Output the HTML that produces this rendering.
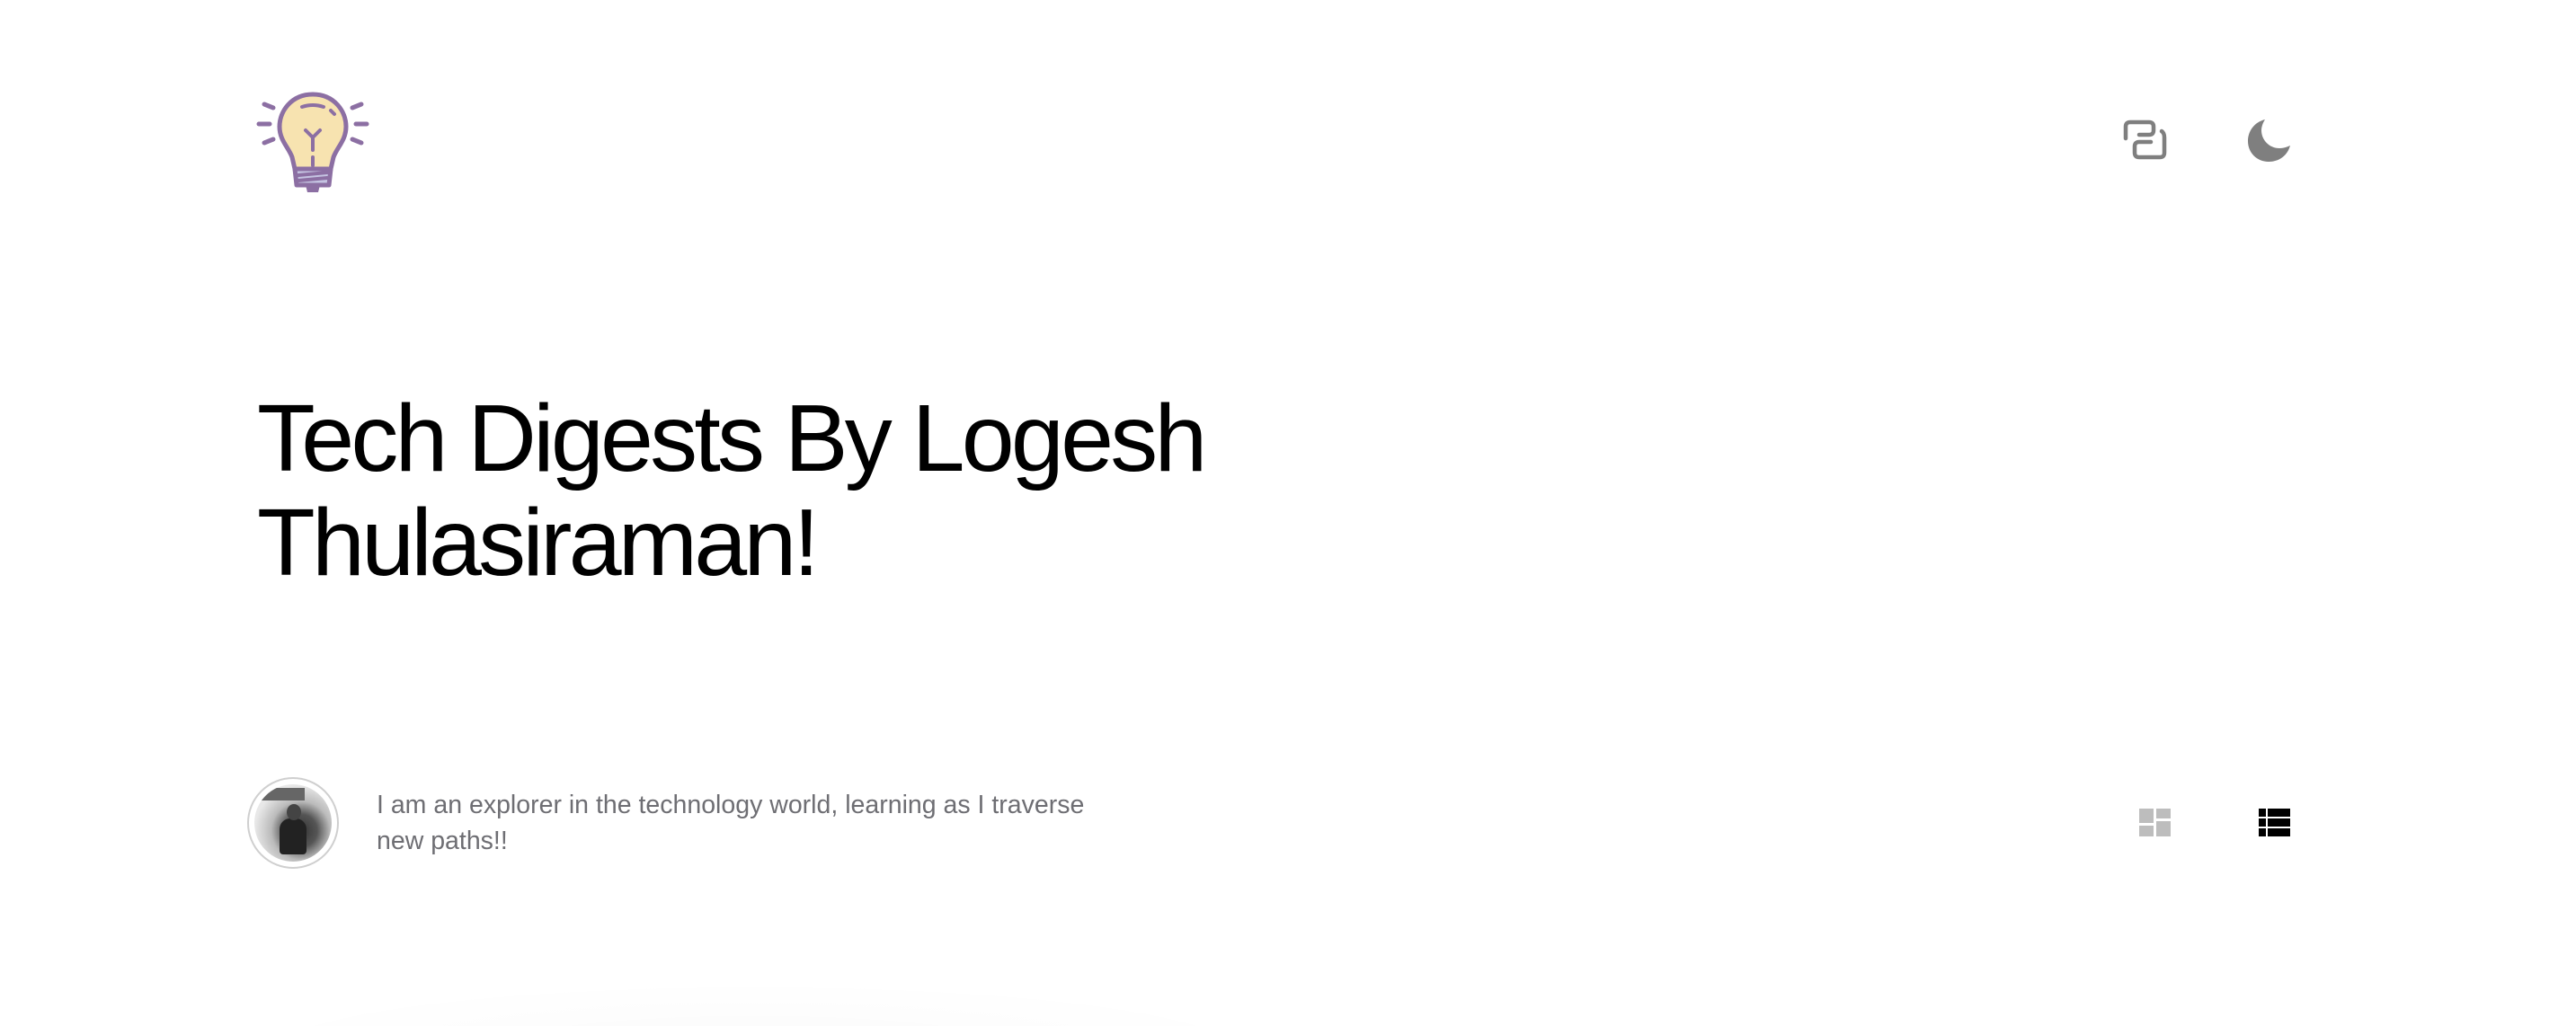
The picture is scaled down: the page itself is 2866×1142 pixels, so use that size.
<!DOCTYPE html>
<html><head><meta charset="utf-8"><style>
html,body{margin:0;padding:0;background:#fff;width:2866px;height:1142px;overflow:hidden;position:relative;font-family:"Liberation Sans",sans-serif}
.abs{position:absolute}
h1{position:absolute;left:286px;top:430px;margin:0;font-weight:400;font-size:106px;line-height:116px;letter-spacing:-3.8px;color:#000;width:1400px}
.bio{left:419px;top:876px;font-size:28.5px;line-height:40px;color:#6e6e73;width:1000px}
.shadow{left:240px;top:1090px;width:1200px;height:80px;background:radial-gradient(ellipse at 50% 100%,rgba(0,0,0,0.02),rgba(0,0,0,0) 70%)}
</style></head><body>
<svg class="abs" style="left:284px;top:98px" width="128" height="120" viewBox="0 0 128 120">
 <g stroke="#8c6fa3" stroke-width="5" stroke-linecap="round" fill="none">
  <line x1="4" y1="40" x2="16" y2="40"/><line x1="112" y1="40" x2="124" y2="40"/>
  <line x1="10" y1="18" x2="20" y2="22"/><line x1="118" y1="18" x2="108" y2="22"/>
  <line x1="10" y1="61" x2="20" y2="57"/><line x1="118" y1="61" x2="108" y2="57"/>
 </g>
 <path d="M64 7 C40 7 27 26 27 43 C27 58 37 66 41 77 L44 90 L84 90 L87 77 C91 66 101 58 101 43 C101 26 88 7 64 7Z" fill="#f7e3b0" stroke="#8c6fa3" stroke-width="5"/>
 <path d="M44 90 L84 90 L82 108 L46 108Z" fill="#c5c4e2" stroke="#8c6fa3" stroke-width="5" stroke-linejoin="round"/>
 <g stroke="#8c6fa3" stroke-width="4" stroke-linecap="round" fill="none">
  <line x1="48" y1="97" x2="80" y2="94"/><line x1="48" y1="103" x2="80" y2="100"/>
  <line x1="56" y1="47" x2="64" y2="55"/><line x1="72" y1="47" x2="64" y2="55"/><line x1="64" y1="55" x2="64" y2="69"/><line x1="64" y1="77" x2="64" y2="86"/>
  <path d="M52 21 Q64 17 76 21"/><line x1="84" y1="25" x2="88" y2="29"/>
 </g>
 <path d="M56 108 L72 108 L70 116 L58 116Z" fill="#8c6fa3"/>
</svg>
<svg class="abs" style="left:2360px;top:132px" width="52" height="48" viewBox="0 0 52 48">
 <g stroke="#7f7f7f" stroke-width="4.5" stroke-linecap="round" fill="none">
  <path d="M5 22 L5 9 Q5 4 10 4 L31 4 Q36 4 36 9 L36 13 Q36 18 31 18 L20 18"/>
  <path d="M45 14 Q48 16 48 21 L48 38 Q48 43 43 43 L20 43 Q15 43 15 38 L15 31 Q15 26 20 26 L33 26"/>
 </g>
</svg>
<svg class="abs" style="left:2500px;top:130px" width="52" height="52" viewBox="0 0 52 52">
 <path d="M20 3 C8 6 1 16 1 27 C1 40 11 50 24 50 C36 50 45 43 48 32 C44 34 40 35 36 35 C25 35 16 26 16 15 C16 11 18 6 20 3Z" fill="#7f7f7f"/>
</svg>
<h1>Tech Digests By Logesh<br>Thulasiraman!</h1>
<div class="abs" style="left:275px;top:865px;width:98px;height:98px;border-radius:50%;border:2px solid #cfcfcf;background:#fff"></div>
<div class="abs" style="left:283px;top:873px;width:86px;height:86px;border-radius:50%;background:radial-gradient(circle at 60% 60%,#333 0,#555 25%,#bbb 45%,#e8e8e8 70%);overflow:hidden">
 <div style="position:absolute;left:28px;top:38px;width:30px;height:40px;background:#222;border-radius:12px 12px 4px 4px"></div>
 <div style="position:absolute;left:36px;top:22px;width:16px;height:18px;background:#444;border-radius:50%"></div>
 <div style="position:absolute;left:6px;top:4px;width:50px;height:14px;background:#666"></div>
</div>
<div class="abs bio">I am an explorer in the technology world, learning as I traverse<br>new paths!!</div>
<svg class="abs" style="left:2378px;top:898px" width="40" height="36" viewBox="0 0 40 36">
 <rect x="2" y="2" width="16" height="16" fill="#bdbdbd"/><rect x="21" y="2" width="16" height="11" fill="#bdbdbd"/>
 <rect x="2" y="21" width="16" height="12" fill="#bdbdbd"/><rect x="21" y="16" width="16" height="17" fill="#bdbdbd"/>
</svg>
<svg class="abs" style="left:2511px;top:898px" width="40" height="36" viewBox="0 0 40 36">
 <rect x="2" y="2" width="8" height="9" fill="#000"/><rect x="12" y="2" width="25" height="9" fill="#000"/>
 <rect x="2" y="13" width="8" height="9" fill="#000"/><rect x="12" y="13" width="25" height="9" fill="#000"/>
 <rect x="2" y="24" width="8" height="9" fill="#000"/><rect x="12" y="24" width="25" height="9" fill="#000"/>
</svg>
<div class="abs shadow"></div>
</body></html>
